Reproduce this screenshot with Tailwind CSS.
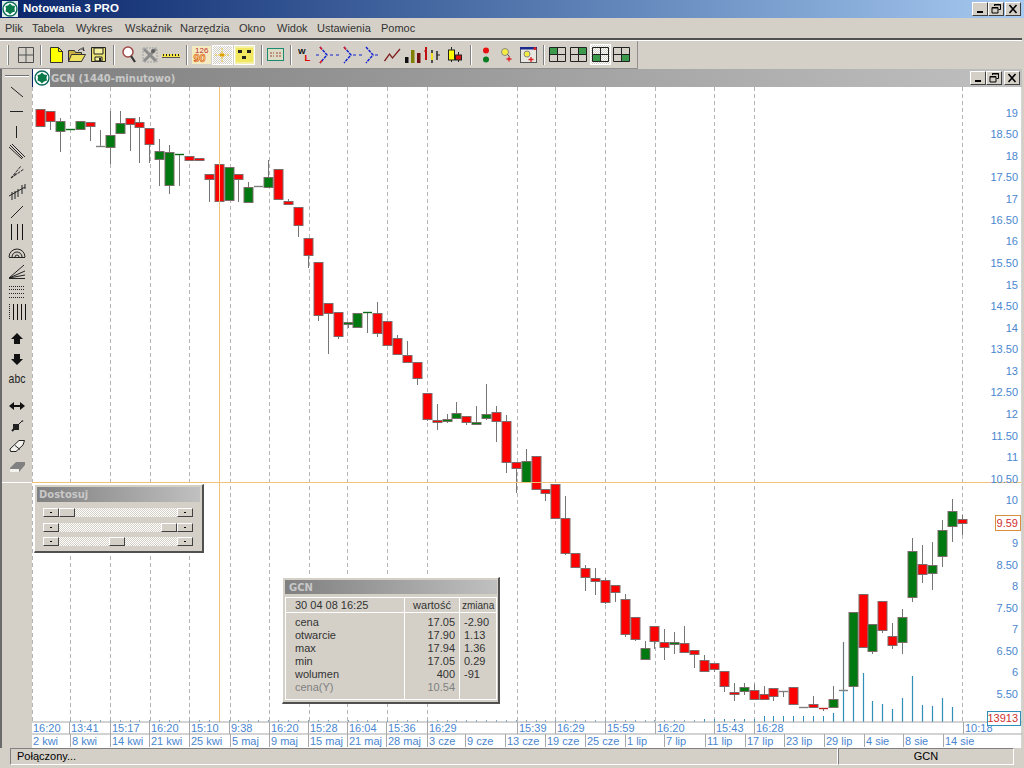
<!DOCTYPE html>
<html lang="pl">
<head>
  <meta charset="UTF-8">
  <title>Notowania 3 PRO</title>
  <script src="https://cdn.jsdelivr.net/npm/@tailwindcss/browser@4"></script>
</head>
<body class="w-[1024px] h-[768px] overflow-hidden bg-[#d4d0c8] flex flex-col font-['Liberation_Sans',Arial,sans-serif] text-[11px] text-[#222]">

  <!-- title bar -->
  <div class="h-[18px] shrink-0 flex items-center bg-gradient-to-r from-[#0a246a] to-[#a6caf0] pl-[2px]">
    <svg class="w-[16px] h-[16px]" viewBox="0 0 16 16"><rect width="16" height="16" fill="#dfeee8"/><circle cx="8" cy="8" r="7" fill="#fff" stroke="#0b6a5c" stroke-width="1.4"/><path d="M8 2.500l2 2 3 .5-.5 3 .5 2.500-3 1-2 2-2-2-2.500-1 .5-3-.5-2.500 2.500-.5z" fill="#0a7a4a"/></svg>
    <span class="ml-[5px] font-bold text-white text-[11.500px]">Notowania 3 PRO</span>
    <div class="ml-auto mr-[3px] flex">
      <button class="w-[16px] h-[14px] bg-[#d4d0c8] border border-t-white border-l-white border-r-[#404040] border-b-[#404040] flex items-end justify-center pb-[2px]"><span class="w-[6px] h-[2px] bg-black"></span></button>
      <button class="w-[16px] h-[14px] bg-[#d4d0c8] border border-t-white border-l-white border-r-[#404040] border-b-[#404040]"><svg class="w-[14px] h-[12px]" viewBox="0 0 14 12"><path d="M5.500 3V1.500h6v5H9.500M3 4.500h6v5.500H3z" fill="none" stroke="#000"/><path d="M5 2h7M3 5h6" stroke="#000"/></svg></button>
      <button class="ml-[1px] w-[16px] h-[14px] bg-[#d4d0c8] border border-t-white border-l-white border-r-[#404040] border-b-[#404040]"><svg class="w-[14px] h-[12px]" viewBox="0 0 14 12"><path d="M3.500 2l7 8M10.500 2l-7 8" stroke="#000" stroke-width="1.600"/></svg></button>
    </div>
  </div>

  <!-- menu -->
  <div class="h-[20px] shrink-0 flex items-center pl-[5px] text-[11px] text-[#333]">
    <span class="w-[27px]">Plik</span><span class="w-[44px]">Tabela</span><span class="w-[49px]">Wykres</span><span class="w-[55px]">Wskaźnik</span><span class="w-[59px]">Narzędzia</span><span class="w-[38px]">Okno</span><span class="w-[40px]">Widok</span><span class="w-[64px]">Ustawienia</span><span>Pomoc</span>
  </div>
  <div class="h-[3px] shrink-0 mr-[2px] border-t-2 border-[#505050] border-b border-b-white"></div>

  <!-- toolbar -->
  <div class="h-[28px] shrink-0 w-[638px] flex items-center border-r border-b border-r-[#909090] border-b-[#909090]">
    <span class="ml-[7px] w-[2px] h-[20px] bg-white border-r border-[#808080]"></span>
    <svg class="ml-[9px] w-[16px] h-[16px]" viewBox="0 0 16 16"><path d="M.5.500h15v15H.5zM8 .5v15M.5 8h15" fill="none" stroke="#505050"/></svg>
    <span class="ml-[6px] w-[2px] h-[20px] bg-white border-l border-[#808080]"></span>
    <svg class="ml-[8px] w-[13px] h-[16px]" viewBox="0 0 13 16"><path d="M.5.500h8l4 4v11H.5z" fill="#ff0" stroke="#333"/><path d="M8.500.5v4h4" fill="none" stroke="#333"/></svg>
    <svg class="ml-[5px] w-[18px] h-[16px]" viewBox="0 0 18 16"><path d="M.5 3.500h6l1 2h6v9H.5z" fill="#c8b040" stroke="#333"/><path d="M.5 14.500l3-7h14l-4 7z" fill="#f0e060" stroke="#333"/><path d="M10 4q2-3 5-2l1 2-1-4" fill="none" stroke="#333"/></svg>
    <svg class="ml-[5px] w-[15px] h-[15px]" viewBox="0 0 15 15"><path d="M.5.500h14v14H.5z" fill="#e8e070" stroke="#222"/><path d="M3 1h9v6H3zM4 10h7v4H4z" fill="#f4f0a0" stroke="#222"/><rect x="8" y="11" width="2" height="3" fill="#222"/></svg>
    <span class="ml-[7px] w-[2px] h-[20px] bg-white border-l border-[#808080]"></span>
    <svg class="ml-[7px] w-[14px] h-[17px]" viewBox="0 0 14 17"><circle cx="6" cy="6" r="5" fill="#fff" stroke="#a04848" stroke-width="1.500"/><path d="M9 10l4 6" stroke="#333" stroke-width="2.200"/></svg>
    <svg class="ml-[6px] w-[16px] h-[16px]" viewBox="0 0 16 16"><path d="M2 2l12 12M14 2L2 14" stroke="#8c8c8c" stroke-width="3"/><path d="M1 1h14v14H1z" fill="none" stroke="#a0a0a0" stroke-dasharray="2 1"/><circle cx="11" cy="4" r="2" fill="#606060"/></svg>
    <svg class="ml-[4px] w-[18px] h-[6px]" viewBox="0 0 18 6"><rect y="2" width="18" height="4" fill="#f4e64a"/><path d="M0 5.500h18" stroke="#555"/><path d="M1.500 2v2M4.500 2v2M7.500 2v2M10.500 2v2M13.500 2v2M16.500 2v2" stroke="#222"/></svg>
    <span class="ml-[6px] w-[2px] h-[20px] bg-white border-l border-[#808080]"></span>
    <svg class="ml-[4px] w-[19px] h-[18px]" viewBox="0 0 19 18"><rect width="19" height="18" fill="#f4ecc0"/><text x="3" y="7" font-size="8" fill="#c03030" font-family="Liberation Sans">126</text><text x="1.500" y="15.500" font-size="11" font-weight="bold" fill="#ffe060" stroke="#d03020" stroke-width=".5" font-family="Liberation Sans">90</text></svg>
    <span class="ml-[1px] w-[21px] h-[20px] flex items-center justify-center border border-white bg-[repeating-conic-gradient(#d4d0c8_0_25%,#fff_0_50%)] bg-[length:2px_2px]"><svg class="w-[15px] h-[14px]" viewBox="0 0 15 14"><path d="M7 0v14M0 7h15" stroke="#e8c020" stroke-dasharray="2 1"/><rect x="5" y="5.500" width="4" height="3" fill="#e0a000"/></svg></span>
    <span class="ml-[1px] w-[21px] h-[20px] flex items-center justify-center border border-white bg-[#f4f0a8]"><svg class="w-[17px] h-[14px]" viewBox="0 0 17 14"><rect width="17" height="14" fill="#f2e860"/><rect x="2" y="2" width="4" height="3" fill="#222"/><rect x="11" y="2" width="4" height="3" fill="#222"/><rect x="6" y="8" width="4" height="3" fill="#222"/></svg></span>
    <span class="ml-[6px] w-[2px] h-[20px] bg-white border-l border-[#808080]"></span>
    <svg class="ml-[4px] w-[17px] h-[13px]" viewBox="0 0 17 13"><rect x=".5" y=".5" width="16" height="12" fill="#dcdcc4" stroke="#1a8a70"/><path d="M3 5h4M9 5h5M3 8h4M9 8h5" stroke="#a04040" stroke-dasharray="2 1"/></svg>
    <span class="ml-[6px] w-[2px] h-[20px] bg-white border-l border-[#808080]"></span>
    <svg class="ml-[6px] w-[13px] h-[20px]" viewBox="0 0 13 20"><text x="0" y="9" font-size="8" font-weight="bold" fill="#111" font-family="Liberation Sans">W</text><text x="6.500" y="16" font-size="9.500" font-weight="bold" fill="#e00000" font-family="Liberation Sans">L</text></svg>
    <svg class="ml-[5px] w-[63px] h-[18px]" viewBox="0 0 63 18"><g fill="none" stroke="#1020d0"><path d="M0 9h3M14 9h3M20 9h3M37 9h3M43 9h3M59 9h3"/><path d="M4 1l7 8-7 8" stroke-width="1.400" stroke-dasharray="3 1"/><path d="M28 1l7 8-7 8" stroke-width="1.400" stroke-dasharray="3 1"/><path d="M50 1l7 8-7 8" stroke-width="1.400" stroke-dasharray="3 1"/></g><path d="M4 1l2 2.500M4 17l2-2.500" stroke="#e02020" stroke-width="1.500"/><path d="M28 1l2 2.500" stroke="#e02020" stroke-width="1.500"/></svg>
    <svg class="ml-[5px] w-[17px] h-[14px]" viewBox="0 0 17 14"><path d="M.5 13l5-7 3 4L16 1" fill="none" stroke="#802020" stroke-width="1.300"/></svg>
    <svg class="ml-[4px] w-[16px] h-[16px]" viewBox="0 0 16 16"><rect y="10" width="3.500" height="6" fill="#101010"/><rect x="6" y="3" width="3.500" height="13" fill="#808000"/><rect x="12" y="6" width="3.500" height="10" fill="#701010"/></svg>
    <svg class="ml-[3px] w-[16px] h-[16px]" viewBox="0 0 16 16"><path d="M2 0v13" stroke="#c01010" stroke-width="2"/><path d="M2 4H0" stroke="#c01010"/><path d="M8 3v13" stroke="#222" stroke-width="1.500"/><path d="M13 4v9" stroke="#222" stroke-width="1.500"/><path d="M8 6v7" stroke="#f0e020" stroke-width="2"/><path d="M13 8h3" stroke="#222"/></svg>
    <svg class="ml-[8px] w-[14px] h-[16px]" viewBox="0 0 14 16"><path d="M3.500 0v15" stroke="#222"/><rect x=".5" y="3" width="6" height="10" fill="#ff0" stroke="#222"/><path d="M10.500 5v10" stroke="#222"/><rect x="7.500" y="8" width="6" height="5" fill="#e01010" stroke="#222"/></svg>
    <span class="ml-[8px] w-[2px] h-[20px] bg-white border-l border-[#808080]"></span>
    <svg class="ml-[10px] w-[8px] h-[16px]" viewBox="0 0 8 16"><circle cx="4" cy="3.500" r="3" fill="#e81010"/><circle cx="4" cy="12.500" r="3" fill="#0a7a20"/></svg>
    <svg class="ml-[10px] w-[13px] h-[15px]" viewBox="0 0 13 15"><circle cx="5" cy="5" r="3.500" fill="#f4ec40" stroke="#888"/><path d="M7.500 7.500l2 2" stroke="#555"/><path d="M9 9.500v5M6.500 12h5" stroke="#e02020" stroke-width="1.300"/></svg>
    <svg class="ml-[7px] w-[17px] h-[16px]" viewBox="0 0 17 16"><rect x=".5" y=".5" width="16" height="15" fill="#e8e8e0" stroke="#555"/><rect x="0" y="0" width="17" height="2.500" fill="#1c2a90"/><circle cx="15" cy="1.500" r="1.500" fill="#e02020"/><circle cx="7" cy="7" r="3" fill="#f4ec40" stroke="#888"/><path d="M11 10v5M8.500 12.500h5" stroke="#e02020" stroke-width="1.300"/></svg>
    <span class="ml-[6px] w-[2px] h-[20px] bg-white border-l border-[#808080]"></span>
    <svg class="ml-[4px] w-[17px] h-[15px]" viewBox="0 0 17 15"><rect x="1" y="1" width="7" height="6" fill="#3c9a4c"/><path d="M.5.500h16v14H.5zM8.500.5v14M.5 7.500h16" fill="none" stroke="#222"/></svg>
    <svg class="ml-[4px] w-[17px] h-[15px]" viewBox="0 0 17 15"><rect x="9" y="1" width="7" height="6" fill="#3c9a4c"/><path d="M.5.500h16v14H.5zM8.500.5v14M.5 7.500h16" fill="none" stroke="#222"/></svg>
    <span class="ml-[3px] w-[21px] h-[21px] -mr-[2px] flex items-center justify-center border border-white bg-[repeating-conic-gradient(#d4d0c8_0_25%,#fff_0_50%)] bg-[length:2px_2px]"><svg class="w-[17px] h-[15px]" viewBox="0 0 17 15"><rect x="1" y="8" width="7" height="6" fill="#3c9a4c"/><path d="M.5.500h16v14H.5zM8.500.5v14M.5 7.500h16" fill="none" stroke="#222"/></svg></span>
    <svg class="ml-[4px] w-[17px] h-[15px]" viewBox="0 0 17 15"><rect x="9" y="8" width="7" height="6" fill="#3c9a4c"/><path d="M.5.500h16v14H.5zM8.500.5v14M.5 7.500h16" fill="none" stroke="#222"/></svg>
  </div>

  <!-- workspace -->
  <div class="relative flex-1 flex flex-col">
    <div class="h-[679px] shrink-0 flex border-l-2 border-[#6a6a6a]">
      <!-- drawing tools -->
      <div class="w-[30px] shrink-0 flex flex-col">
        <div class="h-[414px] border-b border-white flex flex-col items-center">
          <span class="mt-[6px] w-[24px] h-[2px] bg-[#707070] border-b border-white"></span>
          <svg class="mt-[5px] w-[20px] h-[20px]" viewBox="0 0 20 20"><path d="M4 5l12 10" stroke="#222"/></svg>
          <svg class="w-[20px] h-[20px]" viewBox="0 0 20 20"><path d="M3 9.500h13" stroke="#222"/></svg>
          <svg class="w-[20px] h-[20px]" viewBox="0 0 20 20"><path d="M9.500 4v12" stroke="#222"/></svg>
          <svg class="w-[20px] h-[20px]" viewBox="0 0 20 20"><path d="M2 5l13 12M5 2l13 13M3 3l13 13" stroke="#222" fill="none"/></svg>
          <svg class="w-[20px] h-[20px]" viewBox="0 0 20 20"><path d="M4 16l10-12M4 16l13-9M4 16l6-5" stroke="#222" stroke-dasharray="3 1" fill="none"/></svg>
          <svg class="w-[20px] h-[20px]" viewBox="0 0 20 20"><path d="M2 14l16-9M5 10v8M8 9v8M11 7v8M15 3v9M18 2v5" stroke="#222" fill="none"/></svg>
          <svg class="w-[20px] h-[20px]" viewBox="0 0 20 20"><path d="M4 16L16 4" stroke="#222"/></svg>
          <svg class="w-[20px] h-[20px]" viewBox="0 0 20 20"><path d="M4.500 2v16M10.500 2v16M15.500 2v16" stroke="#111"/></svg>
          <svg class="w-[20px] h-[20px]" viewBox="0 0 20 20"><path d="M2 15a8 8 0 0 1 16 0M5 15a5 5 0 0 1 10 0M8 15a2 2 0 0 1 4 0M2 15.500h16" stroke="#222" fill="none"/></svg>
          <svg class="w-[20px] h-[20px]" viewBox="0 0 20 20"><path d="M2 16L17 3M2 16l16-7M2 16l16-3M2 16.500h16" stroke="#222" fill="none"/></svg>
          <svg class="w-[20px] h-[20px]" viewBox="0 0 20 20"><path d="M2 4.500h16M2 7.500h16M2 11.500h16M2 15.500h16" stroke="#222" stroke-dasharray="1 1"/></svg>
          <svg class="w-[20px] h-[20px]" viewBox="0 0 20 20"><path d="M2.500 2v16" stroke="#222" stroke-dasharray="1 1"/><path d="M6.500 2v16M10.500 2v16M14.500 2v16M18.500 2v16" stroke="#111"/></svg>
          <svg class="mt-[7px] w-[20px] h-[20px]" viewBox="0 0 20 20"><path d="M10 4l6 6h-3v5H7v-5H4z" fill="#111"/></svg>
          <svg class="w-[20px] h-[20px]" viewBox="0 0 20 20"><path d="M10 16l6-6h-3V5H7v5H4z" fill="#111"/></svg>
          <span class="w-[20px] h-[20px] flex items-center justify-center text-[13px] text-[#222] scale-x-[.8]">abc</span>
          <svg class="mt-[7px] w-[20px] h-[20px]" viewBox="0 0 20 20"><path d="M2 10l5-4v3h6V6l5 4-5 4v-3H7v3z" fill="#111"/></svg>
          <svg class="w-[20px] h-[20px]" viewBox="0 0 20 20"><rect x="6" y="8" width="6" height="6" fill="#222"/><path d="M12 8l3-3" stroke="#222"/><circle cx="15.500" cy="5" r=".8" fill="#222"/><path d="M5 15l2-2" stroke="#222" stroke-width="2"/></svg>
          <svg class="w-[20px] h-[20px]" viewBox="0 0 20 20"><path d="M3 13L12 4.500h5.500L16 9l-7 6.500H3.500z" fill="#f4f2ec" stroke="#222"/><path d="M8 9.500l5 4" stroke="#222"/></svg>
          <svg class="w-[20px] h-[20px]" viewBox="0 0 20 20"><path d="M3 12l6-6h9v3l-6 7H3z" fill="#808080"/><path d="M3 13h9v3H3z" fill="#f4f2ec"/></svg>
        </div>
      </div>

      <!-- chart window -->
      <div class="w-[990px] shrink-0 flex flex-col">
        <div class="h-[18px] shrink-0 flex items-center bg-gradient-to-r from-[#808080] to-[#c0c0c0]">
          <span class="w-[18px] h-[18px] flex items-center justify-center bg-white border-l border-[#0a246a]">
            <svg class="w-[16px] h-[16px]" viewBox="0 0 16 16"><circle cx="8" cy="8" r="7" fill="#fff" stroke="#0b6a5c" stroke-width="1.400"/><path d="M8 2.500l2 2 3 .5-.5 3 .5 2.500-3 1-2 2-2-2-2.500-1 .5-3-.5-2.500 2.500-.5z" fill="#0a7a4a"/></svg>
          </span>
          <span class="ml-[1px] font-['DejaVu_Sans',sans-serif] font-bold text-[10px] text-[#c8c8c8]">GCN (1440-minutowo)</span>
          <div class="ml-auto mr-[2px] flex">
            <button class="w-[16px] h-[14px] bg-[#d4d0c8] border border-t-white border-l-white border-r-[#404040] border-b-[#404040] flex items-end justify-center pb-[2px]"><span class="w-[6px] h-[2px] bg-black"></span></button>
            <button class="w-[16px] h-[14px] bg-[#d4d0c8] border border-t-white border-l-white border-r-[#404040] border-b-[#404040]"><svg class="w-[14px] h-[12px]" viewBox="0 0 14 12"><path d="M5.500 3V1.500h6v5H9.500M3 4.500h6v5.500H3z" fill="none" stroke="#000"/><path d="M5 2h7M3 5h6" stroke="#000"/></svg></button>
            <button class="ml-[2px] w-[16px] h-[14px] bg-[#d4d0c8] border border-t-white border-l-white border-r-[#404040] border-b-[#404040]"><svg class="w-[14px] h-[12px]" viewBox="0 0 14 12"><path d="M3.500 2l7 8M10.500 2l-7 8" stroke="#000" stroke-width="1.600"/></svg></button>
          </div>
        </div>
        <svg id="chart" class="w-[990px] h-[661px] bg-white shrink-0 font-['Liberation_Sans',Arial,sans-serif]" viewBox="32 87 990 661"></svg>
      </div>
    </div>

    <!-- status bar -->
    <div class="h-[17px] flex text-[11px] text-black ml-[10px]">
      <div class="w-[828px] pl-[6px] flex items-center border-l border-t border-l-[#808080] border-t-[#808080] border-b border-r border-b-white border-r-white">Połączony...</div>
      <div class="w-[176px] flex items-center justify-center border-l border-t border-l-[#808080] border-t-[#808080] border-b border-r border-b-white border-r-white">GCN</div>
    </div>

    <!-- floating: sliders -->
    <div class="absolute left-[34px] top-[415px] w-[170px] h-[69px] bg-[#d4d0c8] p-[2px] border border-t-white border-l-white border-r-[#505050] border-b-[#505050] border-r-2 border-b-2">
      <div class="h-[15px] flex items-center pl-[2px] bg-gradient-to-r from-[#808080] to-[#c0c0c0] font-['DejaVu_Sans',sans-serif] font-bold text-[10px] text-[#c8c8c8]">Dostosuj</div>
      <div class="mt-[6px] ml-[6px] w-[150px] flex h-[9px]">
        <span class="w-[16px] bg-[#d4d0c8] border border-t-white border-l-white border-r-[#404040] border-b-[#404040]"><span class="block w-[2px] h-[1px] bg-black mx-auto mt-[3px]"></span></span>
        <span class="w-[16px] bg-[#d4d0c8] border border-t-white border-l-white border-r-[#404040] border-b-[#404040]"></span>
        <span class="flex-1 bg-[repeating-conic-gradient(#d4d0c8_0_25%,#fff_0_50%)] bg-[length:2px_2px]"></span>
        <span class="w-[16px] bg-[#d4d0c8] border border-t-white border-l-white border-r-[#404040] border-b-[#404040]"><span class="block w-[2px] h-[1px] bg-black mx-auto mt-[3px]"></span></span>
      </div>
      <div class="mt-[6px] ml-[6px] w-[150px] flex h-[9px]">
        <span class="w-[16px] bg-[#d4d0c8] border border-t-white border-l-white border-r-[#404040] border-b-[#404040]"><span class="block w-[2px] h-[1px] bg-black mx-auto mt-[3px]"></span></span>
        <span class="flex-1 bg-[repeating-conic-gradient(#d4d0c8_0_25%,#fff_0_50%)] bg-[length:2px_2px]"></span>
        <span class="w-[16px] bg-[#d4d0c8] border border-t-white border-l-white border-r-[#404040] border-b-[#404040]"></span>
        <span class="w-[16px] bg-[#d4d0c8] border border-t-white border-l-white border-r-[#404040] border-b-[#404040]"><span class="block w-[2px] h-[1px] bg-black mx-auto mt-[3px]"></span></span>
      </div>
      <div class="mt-[5px] ml-[6px] w-[150px] flex h-[9px]">
        <span class="w-[16px] bg-[#d4d0c8] border border-t-white border-l-white border-r-[#404040] border-b-[#404040]"><span class="block w-[2px] h-[1px] bg-black mx-auto mt-[3px]"></span></span>
        <span class="w-[50px] bg-[repeating-conic-gradient(#d4d0c8_0_25%,#fff_0_50%)] bg-[length:2px_2px]"></span>
        <span class="w-[16px] bg-[#d4d0c8] border border-t-white border-l-white border-r-[#404040] border-b-[#404040]"></span>
        <span class="flex-1 bg-[repeating-conic-gradient(#d4d0c8_0_25%,#fff_0_50%)] bg-[length:2px_2px]"></span>
        <span class="w-[16px] bg-[#d4d0c8] border border-t-white border-l-white border-r-[#404040] border-b-[#404040]"><span class="block w-[2px] h-[1px] bg-black mx-auto mt-[3px]"></span></span>
      </div>
    </div>

    <!-- floating: quote panel -->
    <div class="absolute left-[282px] top-[508px] w-[218px] h-[127px] bg-[#d4d0c8] pt-[2px] pl-[2px] border border-t-white border-l-white border-r-2 border-b-2 border-r-[#505050] border-b-[#505050] text-[#333]">
      <div class="w-[212px] h-[14px] flex items-center pl-[4px] bg-gradient-to-r from-[#808080] to-[#c0c0c0] font-['DejaVu_Sans',sans-serif] font-bold text-[10px] text-[#c8c8c8]">GCN</div>
      <div class="mt-[3px] w-[212px] h-[103px] grid grid-cols-[119px_55px_36px] grid-rows-[15px_86px] border border-white">
        <div class="border-r border-b border-white pl-[9px] flex items-center">30 04 08 16:25</div>
        <div class="border-r border-b border-white pr-[8px] flex items-center justify-end">wartość</div>
        <div class="border-b border-white pl-[2px] flex items-center text-[10px]">zmiana</div>
        <div class="border-r border-white pl-[9px] pt-[3px] leading-[13px]">
          <div>cena</div><div>otwarcie</div><div>max</div><div>min</div><div>wolumen</div><div class="text-[#808080]">cena(Y)</div>
        </div>
        <div class="border-r border-white pr-[4px] pt-[3px] leading-[13px] text-right">
          <div>17.05</div><div>17.90</div><div>17.94</div><div>17.05</div><div>400</div><div class="text-[#808080]">10.54</div>
        </div>
        <div class="pl-[4px] pt-[3px] leading-[13px]">
          <div>-2.90</div><div>1.13</div><div>1.36</div><div>0.29</div><div>-91</div>
        </div>
      </div>
    </div>
  </div>

  <script>
    // [x, wick top, wick bottom, body top, body bottom, colour]
    const candles = [
      [40,109,126,109,126,'r'],[50,111,130,111,121,'r'],[60,118,152,121,131,'g'],[70,129,129,129,129,'g'],
      [80,121,129,121,129,'g'],[90,122,141,122,126,'r'],[100,130,146,146,146,'n'],[110,111,164,135,147,'g'],
      [120,111,133,123,133,'g'],[130,118,151,118,124,'r'],[139,117,163,122,127,'r'],[149,128,163,128,144,'r'],
      [159,139,186,151,159,'g'],[169,145,194,152,185,'g'],[179,154,186,154,154,'g'],[189,156,160,156,160,'r'],
      [199,158,160,158,160,'r'],[209,174,202,174,179,'r'],[219,164,201,164,201,'r'],[229,167,200,167,200,'g'],
      [238,174,202,174,179,'r'],[248,182,202,187,202,'g'],[258,186,186,186,186,'n'],[268,160,187,177,187,'g'],
      [278,169,199,169,199,'r'],[288,199,205,201,204,'r'],[298,207,237,207,225,'r'],[308,238,268,238,255,'r'],
      [318,262,321,262,315,'r'],[328,303,354,303,313,'r'],[338,312,339,312,336,'r'],[348,322,328,322,324,'g'],
      [357,313,327,313,327,'g'],[367,312,333,312,312,'g'],[377,302,337,313,333,'r'],[387,321,345,321,345,'r'],
      [397,335,354,338,354,'r'],[407,341,362,355,362,'r'],[417,362,385,362,378,'r'],[427,393,421,393,419,'r'],
      [437,404,430,420,422,'r'],[447,414,423,419,421,'g'],[456,402,418,413,418,'g'],[466,416,425,416,422,'r'],
      [476,406,424,422,424,'g'],[486,384,420,414,418,'g'],[496,406,442,412,421,'r'],[506,415,473,421,462,'r'],
      [516,462,493,462,468,'r'],[526,449,482,461,482,'g'],[536,456,489,456,489,'r'],[545,489,501,489,493,'r'],
      [555,484,518,484,518,'r'],[565,496,555,518,553,'r'],[575,553,567,553,567,'r'],[585,565,591,568,577,'r'],
      [595,568,595,578,581,'r'],[605,578,604,580,602,'r'],[615,585,602,585,592,'r'],[625,594,637,599,634,'r'],
      [635,617,641,617,639,'r'],[645,641,659,648,659,'g'],[654,626,649,626,641,'r'],[664,629,660,642,647,'r'],
      [674,632,654,642,644,'g'],[684,626,652,643,652,'r'],[694,650,668,650,654,'r'],[704,655,671,660,671,'r'],
      [714,663,672,663,669,'r'],[724,671,692,671,686,'r'],[734,683,701,692,694,'r'],[744,683,695,687,691,'g'],
      [754,684,699,690,699,'r'],[764,686,699,694,699,'r'],[773,688,701,688,696,'r'],[783,691,697,691,691,'n'],
      [793,687,704,687,704,'r'],[803,707,707,707,707,'n'],[813,696,707,704,707,'r'],[823,708,711,708,708,'r'],
      [833,686,707,699,707,'g'],[843,642,690,690,690,'n'],[853,612,686,612,686,'g'],[863,594,647,594,647,'r'],
      [872,624,654,624,651,'g'],[882,601,633,601,630,'r'],[892,623,649,636,645,'r'],[902,609,654,617,642,'g'],
      [912,538,602,551,597,'g'],[922,545,583,564,574,'r'],[932,542,590,565,573,'g'],[942,520,567,530,556,'g'],
      [952,499,542,511,526,'g'],[962,515,535,519,523,'r']
    ];
    const volumes = [[833,713],[843,642],[853,660],[863,673],[872,701],[882,704],[892,709],[902,698],[912,676],[922,705],[932,706],[942,698],[952,707]];
    const gridX = [32,70,110,150,189,230,269,309,347,387,427,517,555,605,655,714,754,962];
    const prices = [['19',113],['18.50',134],['18',156],['17.50',177],['17',199],['16.50',220],['16',241],['15.50',263],['15',285],['14.50',306],['14',328],['13.50',349],['13',371],['12.50',392],['12',414],['11.50',436],['11',457],['10.50',479],['10',500],['9',543],['8.50',565],['8',586],['7.50',608],['7',629],['6.50',651],['6',672],['5.50',694]];
    const times = [['16:20',33],['13:41',71],['15:17',112],['16:20',151],['15:10',191],['9:38',231],['16:20',271],['15:28',310],['16:04',349],['15:36',388],['16:29',429],['15:39',519],['16:29',557],['15:59',607],['16:20',657],['15:43',716],['16:28',756],['10:18',965]];
    const dates = [['2 kwi',33],['8 kwi',72],['14 kwi',112],['21 kwi',151],['25 kwi',191],['5 maj',232],['9 maj',271],['15 maj',310],['21 maj',349],['28 maj',388],['3 cze',429],['9 cze',467],['13 cze',507],['19 cze',547],['25 cze',587],['1 lip',627],['7 lip',666],['11 lip',707],['17 lip',747],['23 lip',786],['29 lip',826],['4 sie',866],['8 sie',905],['14 sie',945]];

    let svg = '';
    gridX.forEach(x => {
      svg += `<path d="M${x + .5} 87V721" stroke="#b4b4b4" stroke-dasharray="4 3"/>`;
    });

    // small volume ticks under the quiet part of the chart
    candles.forEach(c => {
      if (c[0] > 700 && c[0] < 833) svg += `<path d="M${c[0] + .5} ${c[0] > 760 ? 716 : 719}V722" stroke="#2f8fb8"/>`;
      else if (c[0] < 833 && c[0] > 60) svg += `<path d="M${c[0] + .5} 720V722" stroke="#7fa6c0"/>`;
    });
    volumes.forEach(v => {
      svg += `<path d="M${v[0] + .5} ${v[1]}V722" stroke="#2f8fb8" stroke-width="1.200"/>`;
    });

    candles.forEach(([x, wt, wb, t, b, col]) => {
      const cx = x + .5;
      const fill = col === 'r' ? '#ff0000' : '#007a10';
      if (wb > wt) svg += `<path d="M${cx} ${wt}V${wb}" stroke="#757575"/>`;
      if (b - t < 1) {
        const line = col === 'n' ? '#808080' : col === 'g' ? '#0a6a1a' : '#c02020';
        svg += `<path d="M${x - 4} ${t + .5}H${x + 5}" stroke="${line}" stroke-width="1.400"/>`;
      } else {
        svg += `<rect x="${x - 4}" y="${t + .5}" width="9" height="${b - t}" fill="${fill}" stroke="#7d6a6a"/>`;
      }
    });

    // crosshair
    svg += `<path d="M219.500 87V721M32 482.500H1021" stroke="#f2c27c"/>`;

    // axes
    prices.forEach(p => {
      svg += `<text x="1018" y="${p[1] + 4}" text-anchor="end" font-size="11" fill="#4a86d0">${p[0]}</text>`;
    });
    svg += `<rect x="32" y="721.500" width="990" height="1" fill="#a8a8a8"/><rect x="32" y="733.500" width="990" height="1" fill="#a8a8a8"/>`;
    svg += `<rect x="1021.500" y="87" width="1" height="661" fill="#a8a8a8"/>`;
    times.forEach(t => {
      svg += `<text x="${t[1]}" y="732" font-size="11" fill="#4a86d0">${t[0]}</text><path d="M${t[1] - 1.500} 722V734" stroke="#a8a8a8"/>`;
    });
    dates.forEach(d => {
      svg += `<text x="${d[1]}" y="745" font-size="11" fill="#4a86d0">${d[0]}</text><path d="M${d[1] - 1.500} 734V747" stroke="#a8a8a8"/>`;
    });

    // last value boxes
    svg += `<rect x="995.500" y="515.500" width="25" height="15" fill="#fff" stroke="#d89040"/><text x="1018" y="527" text-anchor="end" font-size="11" fill="#d03030">9.59</text>`;
    svg += `<rect x="987.500" y="711.500" width="33" height="14" fill="#fff" stroke="#2f8fb8"/><text x="1018" y="722" text-anchor="end" font-size="11" fill="#d03030">13913</text>`;

    document.getElementById('chart').innerHTML = svg;
  </script>
</body>
</html>
